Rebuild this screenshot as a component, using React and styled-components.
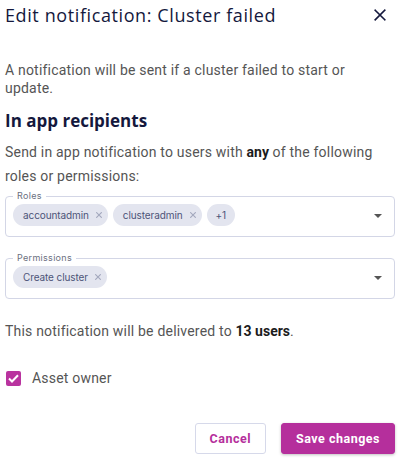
import React from "react";
import styled, { createGlobalStyle } from "styled-components";

const Global = createGlobalStyle`
  html, body { margin: 0; padding: 0; background: #ffffff; }
  * { box-sizing: border-box; }
`;

const Dialog = styled.div`
  width: 400px;
  height: 461px;
  padding: 0 5px;
  display: flex;
  flex-direction: column;
  font-family: Roboto, "Noto Sans", sans-serif;
  color: #4a4a4a;
`;

const Header = styled.div`
  display: flex;
  align-items: center;
  justify-content: space-between;
  height: 30px;
`;

const Title = styled.h1`
  margin: 0;
  font-family: "Open Sans", sans-serif;
  font-weight: 500;
  font-size: 18px;
  color: #14183d;
  letter-spacing: 0.6px;
`;

const CloseButton = styled.button`
  border: none;
  background: none;
  padding: 0;
  margin-right: 9px;
  width: 13px;
  height: 13px;
  display: flex;
  align-items: center;
  justify-content: center;
  cursor: pointer;
`;

const Text = styled.p`
  margin: ${(p) => p.$mt || 0}px 0 0;
  font-size: 14px;
  line-height: ${(p) => p.$lh || 24}px;
  letter-spacing: 0.2px;
  color: #555555;
  b { color: #1c1c1c; font-weight: 700; letter-spacing: 0; }
`;

const Subheading = styled.h2`
  margin: 12px 0 0;
  font-family: "Open Sans", sans-serif;
  font-weight: 700;
  font-size: 17px;
  line-height: 23px;
  color: #14183d;
`;

const Field = styled.fieldset`
  margin: ${(p) => p.$mt}px 0 0;
  padding: 3px 12px 10px 7px;
  border: 1px solid #d3d6e6;
  border-radius: 4px;
  display: flex;
  align-items: center;
  min-width: 0;
`;

const Legend = styled.legend`
  font-size: 9px;
  line-height: 10px;
  color: #6b6f80;
  padding: 0 4px;
  letter-spacing: 0.3px;
  font-family: Inter, sans-serif;
`;

const Chips = styled.div`
  flex: 1;
  display: flex;
  gap: 5px;
  align-items: center;
`;

const Chip = styled.span`
  display: inline-flex;
  align-items: center;
  height: 22px;
  padding: 0 ${(p) => (p.$count ? 9 : 6)}px 0 ${(p) => (p.$count ? 9 : 10)}px;
  border-radius: 11px;
  background: #e3e5ef;
  color: #4d5478;
  font-family: Inter, sans-serif;
  font-size: 10px;
  letter-spacing: -0.1px;
`;

const ChipX = styled.span`
  margin-left: 7px;
  display: inline-flex;
`;

const Caret = styled.span`
  width: 0;
  height: 0;
  border-left: 4px solid transparent;
  border-right: 4px solid transparent;
  border-top: 4px solid #555555;
  margin-top: 2px;
`;

const CheckRow = styled.label`
  display: flex;
  align-items: center;
  gap: 11px;
  height: 24px;
  margin-top: 23px;
  font-size: 14px;
  letter-spacing: 0.2px;
  color: #555555;
`;

const Box = styled.span`
  width: 15px;
  height: 15px;
  margin-left: 1px;
  border-radius: 2px;
  background: #b9339f;
  display: flex;
  align-items: center;
  justify-content: center;
`;

const Footer = styled.div`
  margin-top: auto;
  margin-bottom: 7px;
  display: flex;
  justify-content: flex-end;
  gap: 15px;
`;

const Button = styled.button`
  height: 31px;
  padding: 0 14px;
  border-radius: 3px;
  font-family: Roboto, sans-serif;
  font-weight: 700;
  font-size: 12.5px;
  letter-spacing: 0.5px;
  cursor: pointer;
  border: 1px solid ${(p) => (p.$primary ? "#b52f9c" : "#d6d9ea")};
  background: ${(p) => (p.$primary ? "#b52f9c" : "#ffffff")};
  color: ${(p) => (p.$primary ? "#ffffff" : "#b52f9c")};
  box-shadow: ${(p) => (p.$primary ? "0 1px 3px rgba(0,0,0,0.25)" : "none")};
`;

const X = ({ size = 6, color = "#a3a8bd", w = 1.1 }) => (
  <svg width={size} height={size} viewBox="0 0 10 10">
    <path d="M1 1L9 9M9 1L1 9" stroke={color} strokeWidth={(w * 10) / size} strokeLinecap="square" fill="none" />
  </svg>
);

export default function App() {
  return (
    <>
      <Global />
      <Dialog>
        <Header>
          <Title>Edit notification: Cluster failed</Title>
          <CloseButton aria-label="Close">
            <X size={12} color="#14183d" w={1.6} />
          </CloseButton>
        </Header>
        <Text $mt={31} $lh={18}>A notification will be sent if a cluster failed to start or update.</Text>
        <Subheading>In app recipients</Subheading>
        <Text $mt={8}>
          Send in app notification to users with <b>any</b> of the following roles or permissions:
        </Text>
        <Field $mt={3}>
          <Legend>Roles</Legend>
          <Chips>
            <Chip>accountadmin<ChipX><X /></ChipX></Chip>
            <Chip>clusteradmin<ChipX><X /></ChipX></Chip>
            <Chip $count>+1</Chip>
          </Chips>
          <Caret />
        </Field>
        <Field $mt={16}>
          <Legend>Permissions</Legend>
          <Chips>
            <Chip>Create cluster<ChipX><X /></ChipX></Chip>
          </Chips>
          <Caret />
        </Field>
        <Text $mt={20}>This notification will be delivered to <b>13 users</b>.</Text>
        <CheckRow>
          <Box>
            <svg width="11" height="9" viewBox="0 0 11 9">
              <path d="M1 4.5L4 7.5L10 1.2" stroke="#fff" strokeWidth="2" fill="none" />
            </svg>
          </Box>
          Asset owner
        </CheckRow>
        <Footer>
          <Button>Cancel</Button>
          <Button $primary>Save changes</Button>
        </Footer>
      </Dialog>
    </>
  );
}
